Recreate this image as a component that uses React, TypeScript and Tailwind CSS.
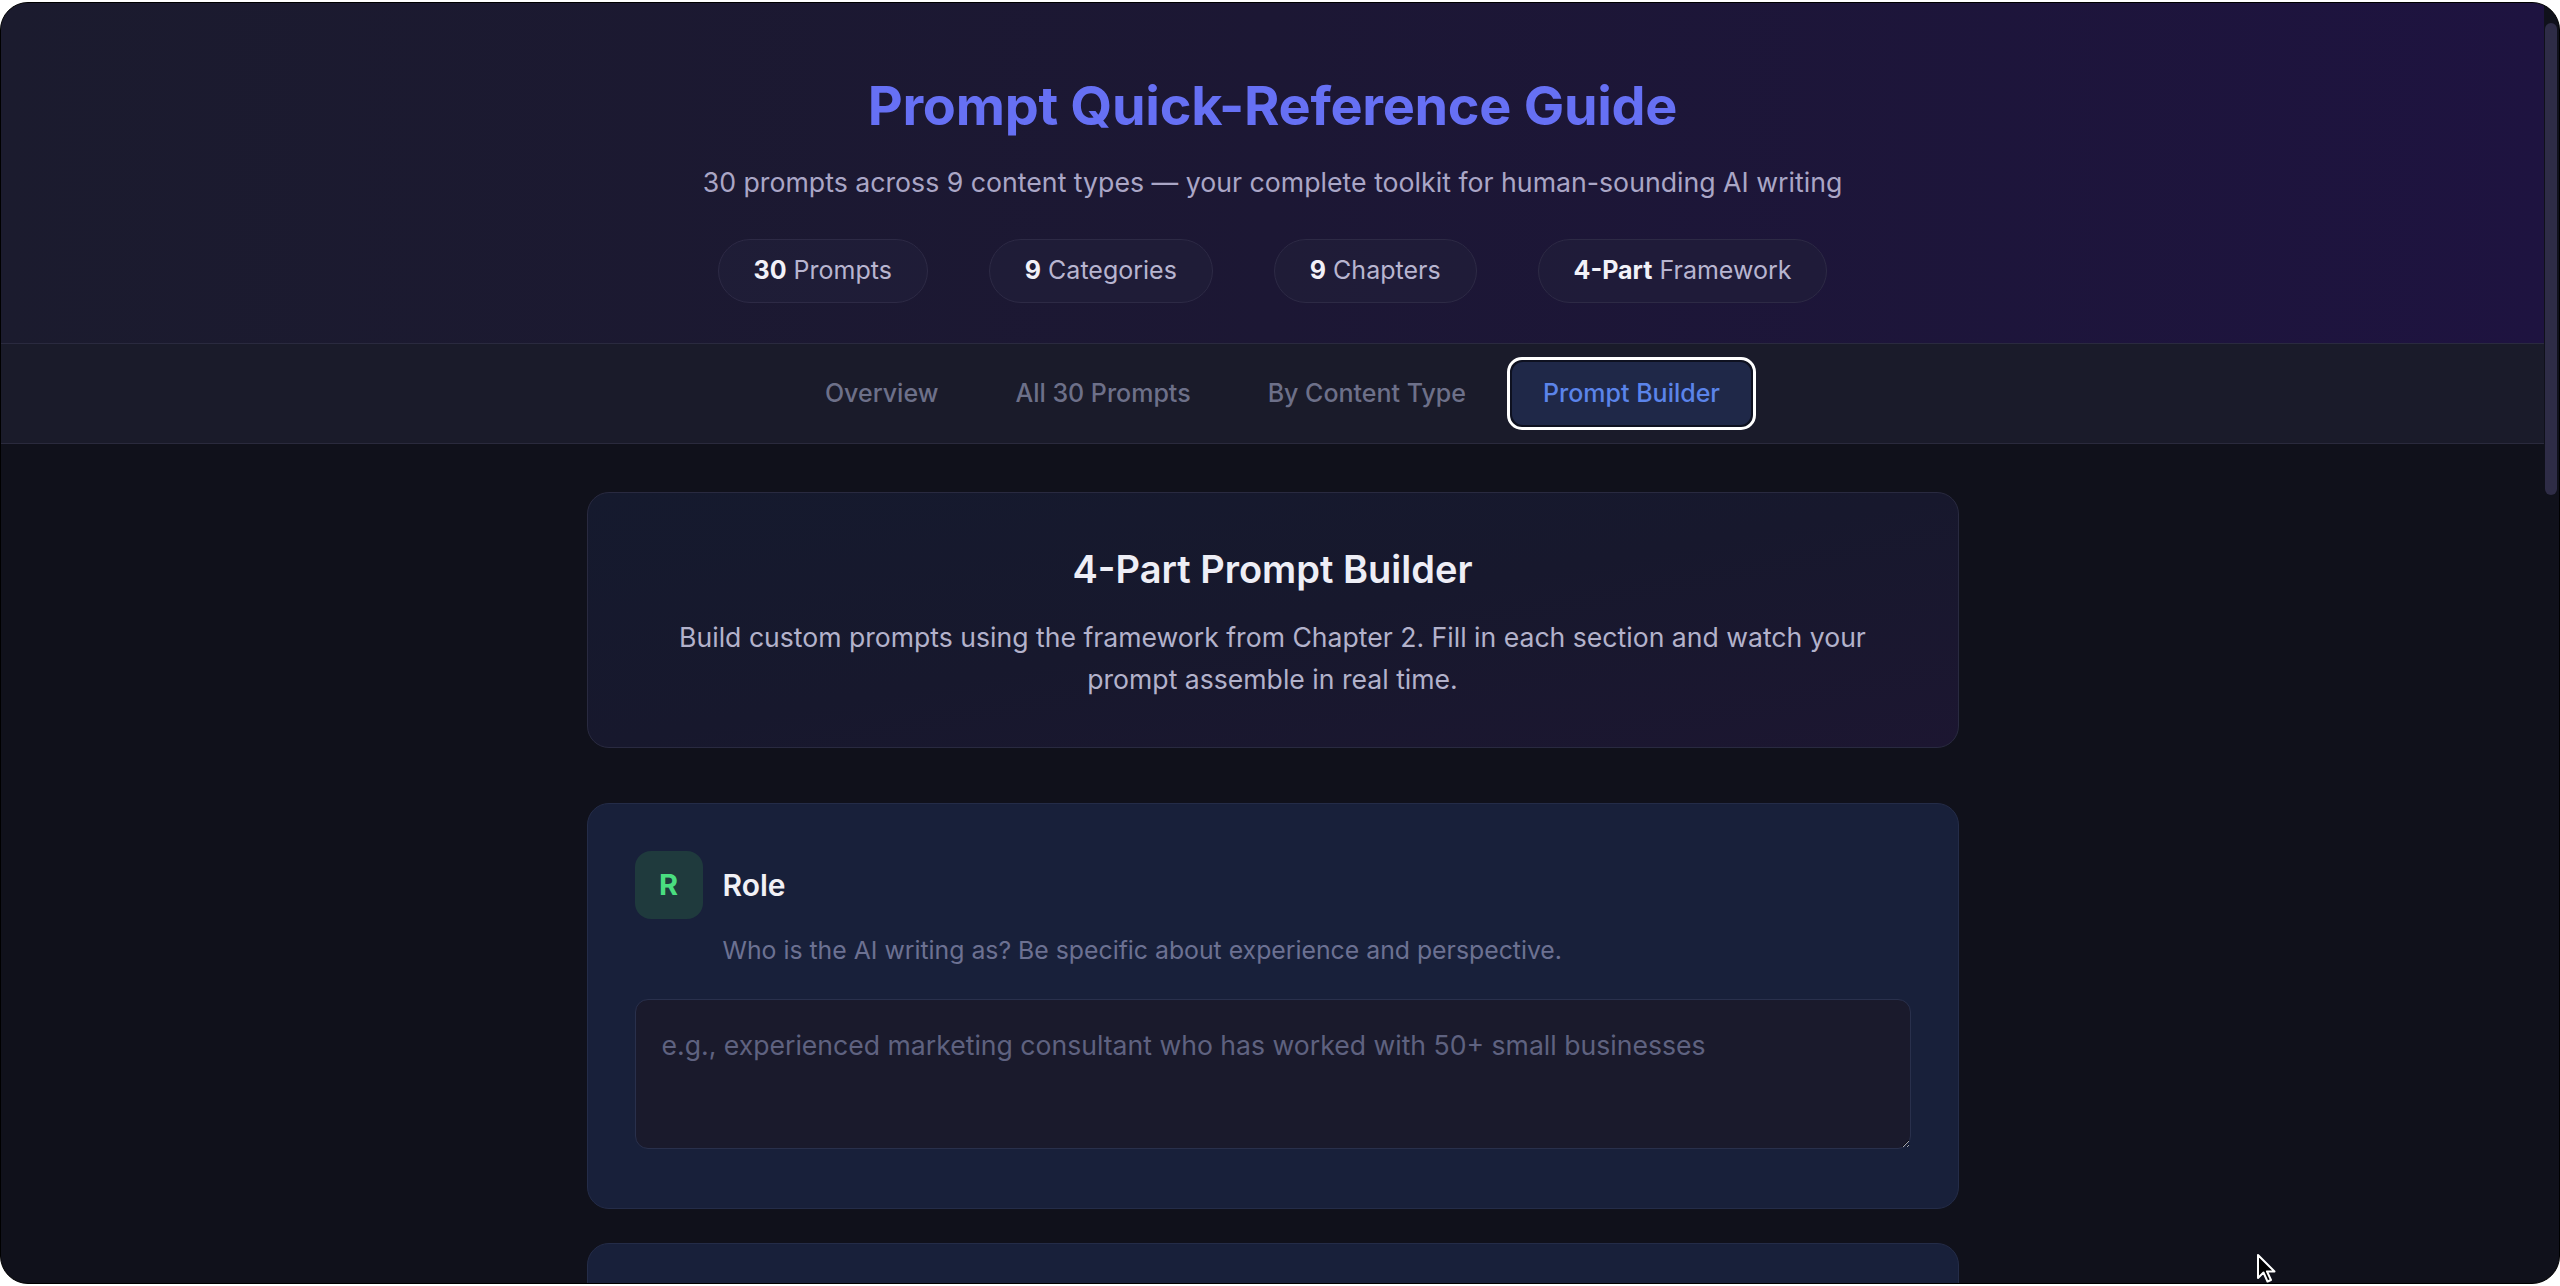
import React from "react";

const stats = [
  { value: "30", label: "Prompts" },
  { value: "9", label: "Categories" },
  { value: "9", label: "Chapters" },
  { value: "4-Part", label: "Framework" },
];

const tabs = ["Overview", "All 30 Prompts", "By Content Type", "Prompt Builder"];

interface ISection {
  letter: string;
  title: string;
  hint: string;
  placeholder: string;
  badgeClass: string;
}

const sections: ISection[] = [
  {
    letter: "R",
    title: "Role",
    hint: "Who is the AI writing as? Be specific about experience and perspective.",
    placeholder: "e.g., experienced marketing consultant who has worked with 50+ small businesses",
    badgeClass: "bg-[#1f3a3d] text-[#4ade80]",
  },
];

const Cursor = () => (
  <svg
    className="absolute left-[2256px] top-[1253px] w-[22px] h-[32px]"
    viewBox="0 0 22 32"
  >
    <path
      d="M2 2 L2 25 L7.5 19.5 L11.5 28.5 L15 27 L11 18.5 L18.5 18.5 Z"
      fill="#000"
      stroke="#fff"
      strokeWidth="2"
      strokeLinejoin="round"
    />
  </svg>
);

const SectionCard = ({ section }: { section: ISection }) => {
  return (
    <div className="rounded-[22px] border border-[#242c48] bg-[#18203a] px-[47px] pt-[47px] pb-[59px]">
      <div className="flex items-center gap-[20px]">
        <div
          className={`flex h-[68px] w-[68px] items-center justify-center rounded-[16px] text-[29px] font-bold ${section.badgeClass}`}
        >
          {section.letter}
        </div>
        <h3 className="text-[30px] font-semibold leading-[40px] text-[#f1f1f6]">
          {section.title}
        </h3>
      </div>
      <p className="ml-[88px] mt-[13px] text-[24.8px] leading-[36px] text-[#6c7192]">
        {section.hint}
      </p>
      <textarea
        className="mt-[31px] block h-[150px] w-full rounded-[13px] border border-[#29304c] bg-[#1a1a2c] px-[26px] pt-[26px] text-[26.6px] leading-[38px] text-[#d6d6e4] placeholder:text-[#5f6280] outline-none"
        placeholder={section.placeholder}
      />
    </div>
  );
};

const App = () => {
  return (
    <div
      className="relative h-[1286px] w-full overflow-hidden bg-white pt-[2px] pb-[2px]"
      style={{ fontFamily: "Inter, 'Noto Sans', sans-serif" }}
    >
      <div className="flex h-full overflow-hidden rounded-[28px] border border-black bg-[#10111b]">
        <div className="min-w-0 flex-1">
          {/* header */}
          <header className="border-b border-[#2a2a3f] bg-linear-to-r from-[#1b1b2e] via-[#1c1734] to-[#1e1340] pt-[72px] pb-[40px] text-center">
            <h1 className="text-[54px] font-bold leading-[62px] tracking-[-0.3px] text-[#6670f4]">
              Prompt Quick-Reference Guide
            </h1>
            <p className="mt-[26px] text-[26.7px] leading-[39px] text-[#aaa6c6]">
              30 prompts across 9 content types — your complete toolkit for human-sounding AI writing
            </p>
            <div className="mt-[37px] flex justify-center gap-[61px]">
              {stats.map((s) => (
                <div
                  key={s.label}
                  className="flex h-[64px] items-center rounded-full border border-[#2d2a45] bg-[#221f3a]/60 px-[35px] text-[25px] text-[#b8b5d0]"
                >
                  <span className="mr-[7px] font-bold text-[#f2f1f8]">{s.value}</span>
                  {s.label}
                </div>
              ))}
            </div>
          </header>

          {/* tabs */}
          <nav className="flex justify-center gap-[5px] border-b border-[#2a2a3d] bg-[#1a1b2a] py-[13px]">
            {tabs.map((t) =>
              t === "Prompt Builder" ? (
                <button
                  key={t}
                  className="h-[73px] rounded-[15px] border-[3px] border-white bg-[#0e1120] p-[2px] text-[25px] font-medium text-[#5b84ea]"
                >
                  <span className="flex h-full items-center rounded-[11px] bg-[#1f2848] px-[31px]">
                    {t}
                  </span>
                </button>
              ) : (
                <button
                  key={t}
                  className="h-[73px] rounded-[14px] px-[36px] text-[25px] font-medium text-[#6d7089]"
                >
                  {t}
                </button>
              )
            )}
          </nav>

          {/* builder */}
          <main className="mx-auto w-[1372px] pt-[48px]">
            <div className="mb-[55px] rounded-[22px] border border-[#292a40] bg-linear-to-br from-[#151a2e] via-[#17182d] to-[#1c1631] px-[47px] pt-[48px] pb-[47px] text-center">
              <h2 className="text-[38px] font-semibold leading-[56px] text-[#eeeef6]">
                4-Part Prompt Builder
              </h2>
              <p className="mt-[19px] text-[26.6px] leading-[42px] text-[#b3b2cb]">
                Build custom prompts using the framework from Chapter 2. Fill in each section and watch your prompt assemble in real time.
              </p>
            </div>
            <div className="flex flex-col gap-[34px]">
              {sections.map((s) => (
                <SectionCard key={s.letter} section={s} />
              ))}
              {/* next section, scrolled below the fold */}
              <div className="h-[400px] rounded-[22px] border border-[#242c48] bg-[#18203a]" />
            </div>
          </main>
        </div>

        {/* scrollbar */}
        <div className="relative w-[15px] shrink-0">
          <div className="absolute left-[1px] top-[20px] h-[472px] w-[12px] rounded-full bg-[#2e2c46]" />
        </div>
      </div>
      <Cursor />
    </div>
  );
};

export default App;
